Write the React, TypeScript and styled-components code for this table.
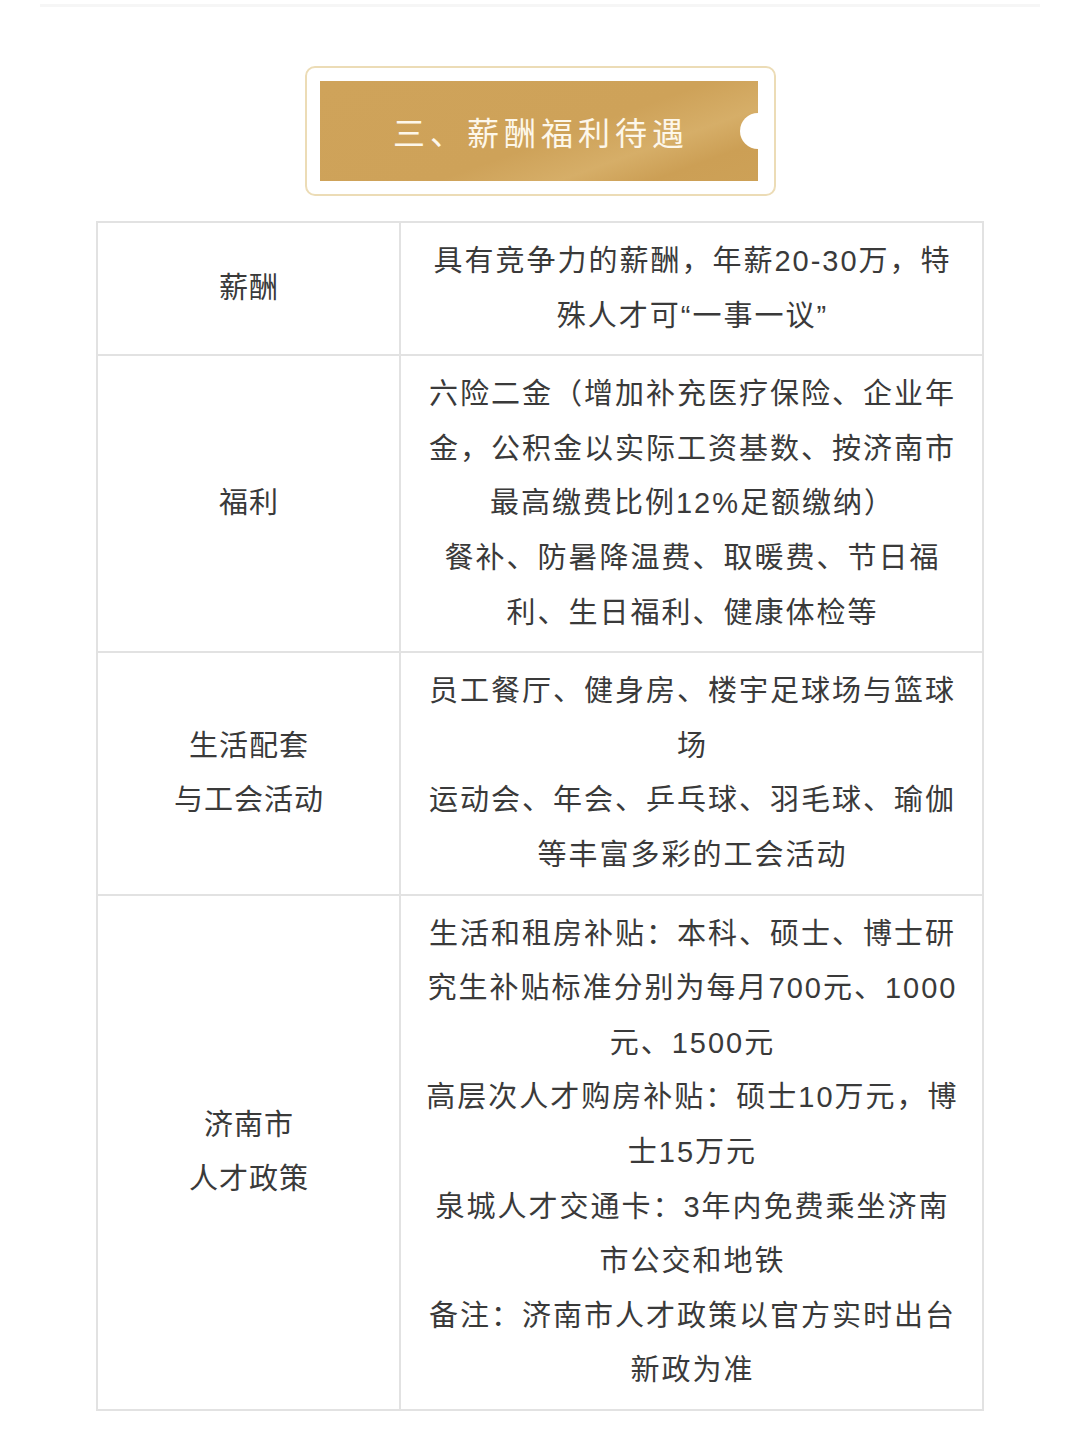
import React from 'react';
import styled, { createGlobalStyle } from 'styled-components';

const GlobalStyle = createGlobalStyle`
  body {
    margin: 0;
    background: #ffffff;
    font-family: "Noto Sans CJK SC", "Noto Sans", sans-serif;
    color: #3a3a3a;
  }
`;

const Page = styled.div`
  display: flex;
  flex-direction: column;
  align-items: center;
  padding-bottom: 24px;
`;

const TopRule = styled.div`
  align-self: stretch;
  height: 3px;
  margin: 4px 40px 0;
  background: #f6f6f6;
`;

const Banner = styled.div`
  margin-top: 59px;
  width: 471px;
  height: 130px;
  box-sizing: border-box;
  padding: 13px 16px 13px 13px;
  border: 2px solid #ecdcb6;
  border-radius: 10px;
`;

const BannerInner = styled.div`
  position: relative;
  height: 100%;
  display: flex;
  align-items: center;
  justify-content: center;
  overflow: hidden;
  background: linear-gradient(
    160deg,
    #cfa35a 0%,
    #cea259 55%,
    #d6ae68 72%,
    #cc9f55 85%,
    #cda157 100%
  );

  &::after {
    content: '';
    position: absolute;
    right: -18px;
    top: 50%;
    width: 36px;
    height: 36px;
    margin-top: -18px;
    border-radius: 50%;
    background: #ffffff;
  }
`;

const BannerTitle = styled.h2`
  margin: 0;
  padding-left: 5px;
  font-size: 32px;
  font-weight: 400;
  letter-spacing: 5px;
  color: #fdf7ea;
`;

const Table = styled.div`
  margin-top: 25px;
  width: 888px;
  box-sizing: border-box;
  border: 2px solid #e2e2e2;
  font-family: "Liberation Sans", "Noto Sans CJK SC", sans-serif;
`;

const Row = styled.div`
  display: grid;
  grid-template-columns: 303px 1fr;
  & + & {
    border-top: 2px solid #e2e2e2;
  }
`;

const Label = styled.div`
  display: flex;
  flex-direction: column;
  align-items: center;
  justify-content: center;
  border-right: 2px solid #e2e2e2;
  font-size: 29px;
  line-height: 54.6px;
  letter-spacing: 1px;
  padding-left: 1px;
`;

const Content = styled.div`
  padding: 11px 0;
  display: flex;
  flex-direction: column;
  align-items: center;
  font-size: 29px;
  line-height: 54.6px;
  letter-spacing: 2px;
`;

const Line = styled.div`
  white-space: nowrap;
  padding-left: 2px;
`;

type RowData = {
  label: string[];
  lines: string[];
};

const rows: RowData[] = [
  {
    label: ['薪酬'],
    lines: ['具有竞争力的薪酬，年薪20-30万，特', '殊人才可“一事一议”'],
  },
  {
    label: ['福利'],
    lines: [
      '六险二金（增加补充医疗保险、企业年',
      '金，公积金以实际工资基数、按济南市',
      '最高缴费比例12%足额缴纳）',
      '餐补、防暑降温费、取暖费、节日福',
      '利、生日福利、健康体检等',
    ],
  },
  {
    label: ['生活配套', '与工会活动'],
    lines: [
      '员工餐厅、健身房、楼宇足球场与篮球',
      '场',
      '运动会、年会、乒乓球、羽毛球、瑜伽',
      '等丰富多彩的工会活动',
    ],
  },
  {
    label: ['济南市', '人才政策'],
    lines: [
      '生活和租房补贴：本科、硕士、博士研',
      '究生补贴标准分别为每月700元、1000',
      '元、1500元',
      '高层次人才购房补贴：硕士10万元，博',
      '士15万元',
      '泉城人才交通卡：3年内免费乘坐济南',
      '市公交和地铁',
      '备注：济南市人才政策以官方实时出台',
      '新政为准',
    ],
  },
];

const App = () => {
  return (
    <>
      <GlobalStyle />
      <Page>
        <TopRule />
        <Banner>
          <BannerInner>
            <BannerTitle>三、薪酬福利待遇</BannerTitle>
          </BannerInner>
        </Banner>
        <Table>
          {rows.map((row) => (
            <Row key={row.label.join('')}>
              <Label>
                {row.label.map((l) => (
                  <span key={l}>{l}</span>
                ))}
              </Label>
              <Content>
                {row.lines.map((line, i) => (
                  <Line key={i}>{line}</Line>
                ))}
              </Content>
            </Row>
          ))}
        </Table>
      </Page>
    </>
  );
};

export default App;
